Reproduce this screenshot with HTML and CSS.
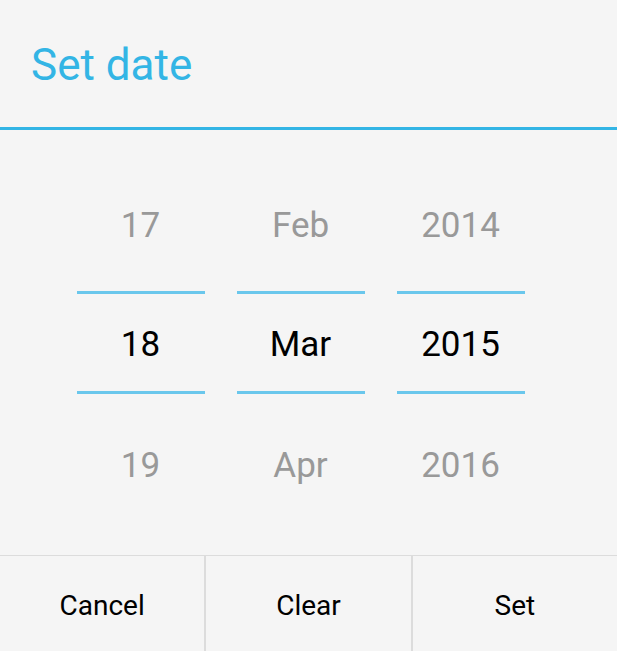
FILE: index.html
```html
<!DOCTYPE html>
<html>
<head>
<meta charset="utf-8">
<link rel="stylesheet" href="styles.css">
</head>
<body>
<div class="dialog">
  <div class="header">
    <div class="title">Set date</div>
  </div>
  <div class="picker-area">
    <div class="picker">
      <div class="item top">17</div>
      <div class="line"></div>
      <div class="item mid">18</div>
      <div class="line"></div>
      <div class="item bot">19</div>
    </div>
    <div class="picker">
      <div class="item top">Feb</div>
      <div class="line"></div>
      <div class="item mid">Mar</div>
      <div class="line"></div>
      <div class="item bot">Apr</div>
    </div>
    <div class="picker">
      <div class="item top">2014</div>
      <div class="line"></div>
      <div class="item mid">2015</div>
      <div class="line"></div>
      <div class="item bot">2016</div>
    </div>
  </div>
  <div class="buttons">
    <div class="btn">Cancel</div>
    <div class="btn">Clear</div>
    <div class="btn">Set</div>
  </div>
</div>
</body>
</html>
```
FILE: styles.css
```css
html, body {
  margin: 0;
  padding: 0;
  background: #f5f5f5;
}
.dialog {
  width: 617px;
  height: 651px;
  display: flex;
  flex-direction: column;
  font-family: Roboto, "Liberation Sans", sans-serif;
  background: #f5f5f5;
}
.header {
  height: 127px;
  border-bottom: 3px solid #33b5e5;
  display: flex;
  align-items: center;
  padding-left: 31px;
  box-sizing: content-box;
}
.title {
  color: #33b5e5;
  font-size: 44px;
  margin-top: 2px;
}
.picker-area {
  flex: 1;
  display: flex;
  justify-content: center;
  gap: 32px;
  padding-top: 27px;
  padding-right: 16px;
  border-bottom: 1px solid #dcdcdc;
}
.picker {
  width: 128px;
  display: flex;
  flex-direction: column;
}
.item {
  text-align: center;
  font-size: 35px;
  color: #999999;
}
.item.top { height: 134px; line-height: 138px; }
.item.mid { height: 97px; line-height: 101px; color: #000; }
.item.bot { height: 140px; line-height: 144px; }
.line {
  height: 3px;
  background: #6ac7ec;
}
.buttons {
  height: 95px;
  display: flex;
}
.btn {
  flex: 1;
  display: flex;
  align-items: center;
  justify-content: center;
  font-size: 28px;
  color: #000;
  padding-top: 3px;
  border-left: 2px solid #dcdcdc;
}
.btn:first-child {
  border-left: none;
}
```
